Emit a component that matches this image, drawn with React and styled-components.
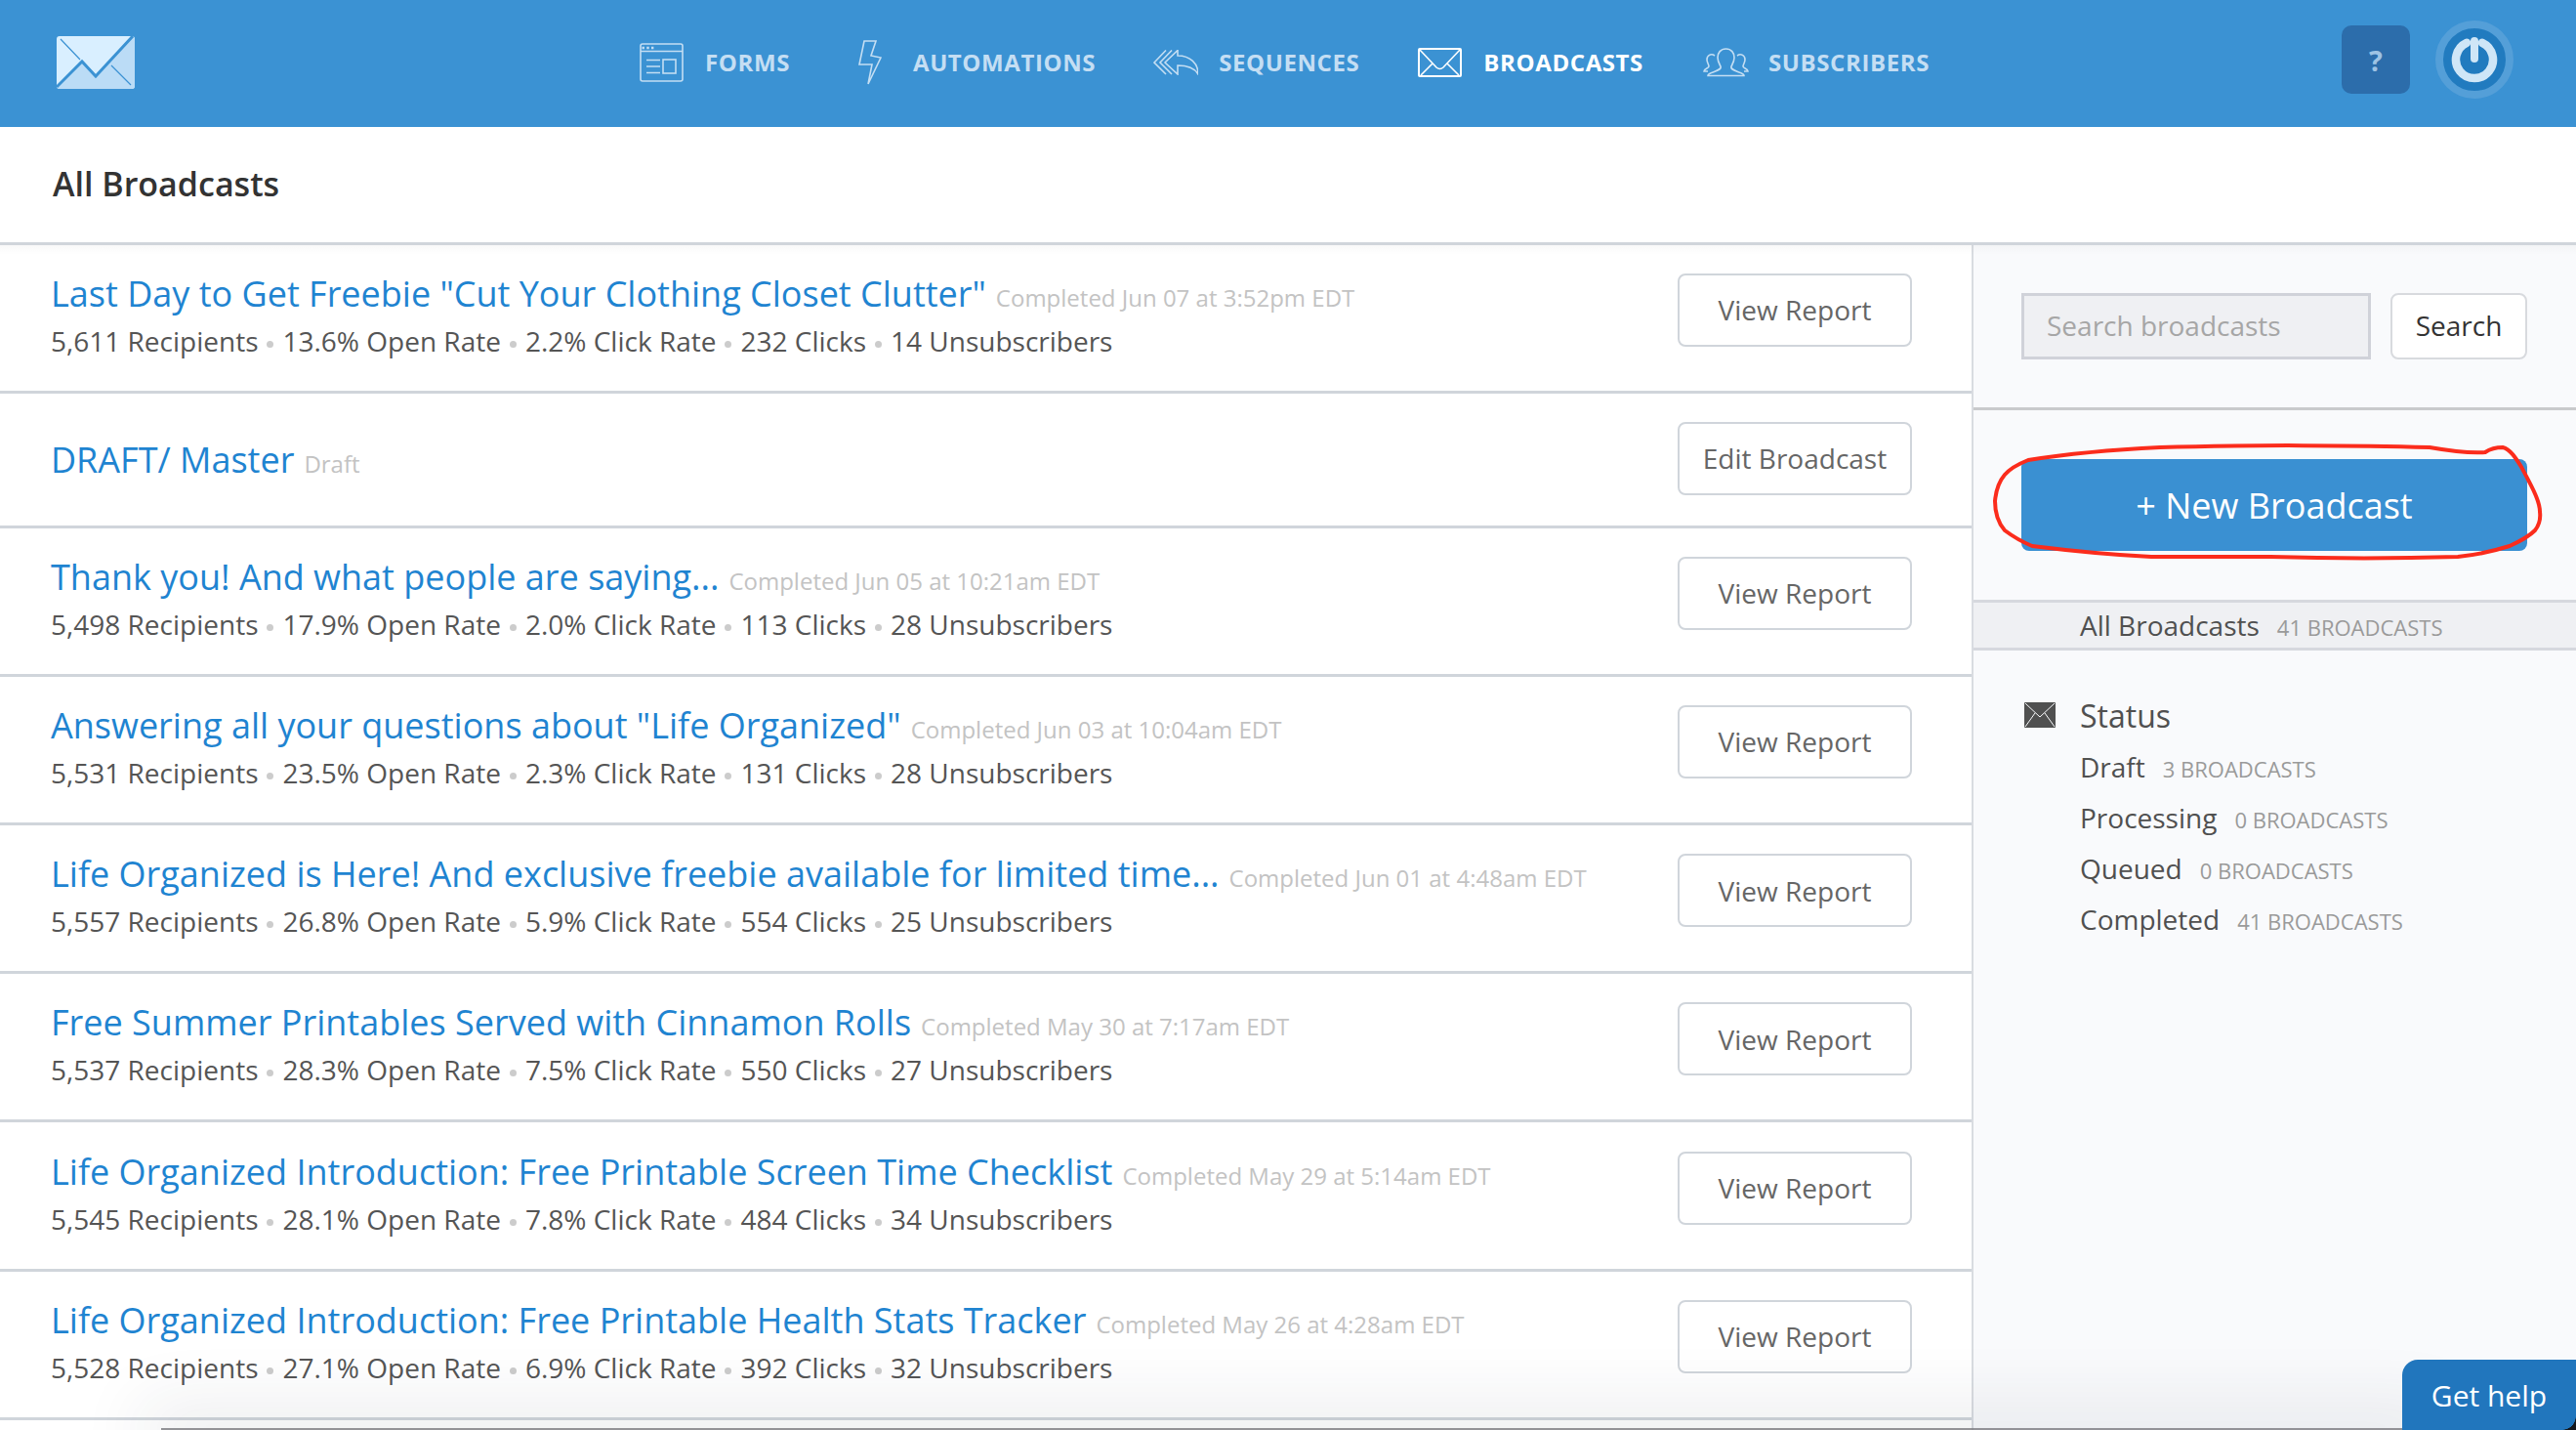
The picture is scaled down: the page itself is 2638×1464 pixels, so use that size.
import React from "react";
import styled, { createGlobalStyle } from "styled-components";

const Global = createGlobalStyle`
  html, body { margin: 0; padding: 0; height: 1464px; overflow: hidden; background: #fff; }
  body { font-family: "Open Sans", "Noto Sans", sans-serif; color: #4d4d4d; }
  * { box-sizing: border-box; }
`;

const Page = styled.div`
  position: relative;
  width: 2638px;
  height: 1464px;
  overflow: hidden;
  display: flex;
  flex-direction: column;
`;
const Header = styled.header`
  flex: none;
  height: 130px;
  background: #3b92d3;
  display: flex;
  align-items: center;
  padding: 0 64px 8px 58px;
`;
const Logo = styled.svg`
  width: 80px;
  height: 54px;
  flex: none;
  margin-top: 6px;
`;
const Nav = styled.nav`
  display: flex;
  align-items: center;
  margin: 5px 0 0 517px;
`;
const NavItem = styled.a`
  display: flex;
  align-items: center;
  gap: ${p => p.$gap}px;
  margin-right: ${p => p.$mr}px;
  font-size: 24px;
  font-weight: 700;
  letter-spacing: 0.6px;
  line-height: 1;
  color: ${p => (p.$active ? "#fff" : "#c4def3")};
  svg { flex: none; display: block; }
`;
const HeaderRight = styled.div`
  margin-left: auto;
  display: flex;
  align-items: center;
  gap: 26px;
`;
const Help = styled.div`
  width: 70px;
  height: 70px;
  border-radius: 10px;
  background: #2c6dab;
  color: #9ec3e4;
  font-size: 29px;
  font-weight: 700;
  display: flex;
  align-items: center;
  justify-content: center;
`;
const Power = styled.div`
  width: 80px;
  height: 80px;
  border-radius: 50%;
  background: #217bbf;
  border: 8px solid #549fd8;
  display: flex;
  align-items: center;
  justify-content: center;
`;
const TitleBar = styled.div`
  flex: none;
  height: 121px;
  display: flex;
  align-items: center;
  padding: 0 0 3px 54px;
  background: #fff;
  border-bottom: 3px solid #d0d5db;
  font-size: 34px;
  font-weight: 600;
  color: #333;
`;
const Body = styled.div`
  position: relative;
  flex: 1;
  display: flex;
  min-height: 0;
  &::before {
    content: "";
    position: absolute;
    left: 0;
    right: 0;
    top: 0;
    height: 10px;
    background: linear-gradient(rgba(0, 0, 0, 0.025), rgba(0, 0, 0, 0));
    pointer-events: none;
  }
`;
const List = styled.main`
  width: 2019px;
  flex: none;
  margin-top: -0.5px;
`;
const Row = styled.div`
  height: ${p => (p.$draft ? 138 : 152.2)}px;
  border-bottom: 3px solid #d0d5db;
  display: flex;
  align-items: center;
  justify-content: space-between;
  padding: 0 61px 0 52px;
`;
const RowText = styled.div`
  min-width: 0;
  margin-top: ${p => (p.$draft ? 8 : -8)}px;
`;
const TitleLine = styled.div`
  line-height: 48px;
  white-space: nowrap;
`;
const RowTitle = styled.a`
  font-size: 36px;
  color: #1f84d1;
`;
const Meta = styled.span`
  font-size: 24px;
  color: #c3c3c3;
  margin-left: 10px;
`;
const Stats = styled.div`
  font-size: 28px;
  line-height: 34px;
  color: #555;
  white-space: nowrap;
`;
const Dot = styled.span`
  display: inline-block;
  width: 7px;
  height: 7px;
  border-radius: 50%;
  background: #ccc;
  margin: 0 9px;
  vertical-align: 4px;
`;
const RowButton = styled.button`
  flex: none;
  width: 240px;
  height: 75px;
  margin-top: ${p => (p.$draft ? -2 : -16)}px;
  background: #fff;
  border: 2px solid #d0d5db;
  border-radius: 8px;
  font: 400 28px "Open Sans", sans-serif;
  color: #666;
  padding: 0;
`;
const Side = styled.aside`
  flex: 1;
  background: #f9fafc;
  border-left: 2px solid #d9dce1;
`;
const SearchBlock = styled.div`
  height: 169px;
  border-bottom: 3px solid #c9cacc;
  display: flex;
  gap: 20px;
  padding: 49px 50px 0 49px;
`;
const SearchInput = styled.div`
  width: 358px;
  height: 68px;
  background: #eff0f3;
  border: 3px solid #d0d2d9;
  color: #a6a6a6;
  font-size: 28px;
  display: flex;
  align-items: center;
  padding: 0 0 3px 23px;
`;
const SearchButton = styled.button`
  width: 140px;
  height: 68px;
  background: #fff;
  border: 2px solid #d8dade;
  border-radius: 8px;
  font: 400 28px "Open Sans", sans-serif;
  color: #333;
  padding: 0 0 3px;
`;
const CtaBlock = styled.div`
  padding: 50px 50px 50px 49px;
  position: relative;
`;
const Cta = styled.button`
  display: block;
  width: 518px;
  height: 94px;
  background: #3a90d2;
  border: none;
  border-radius: 8px;
  color: #fff;
  font: 400 36px "Open Sans", sans-serif;
  padding: 0;
`;
const Scribble = styled.svg`
  position: absolute;
  left: 0;
  top: 0;
  width: 617px;
  height: 194px;
  pointer-events: none;
`;
const AllRow = styled.div`
  height: 52px;
  background: #eff0f3;
  border-top: 3px solid #d6d8de;
  border-bottom: 3px solid #d6d8de;
  display: flex;
  align-items: center;
  padding: 0 0 1px 109px;
`;
const FilterLabel = styled.span`
  font-size: 28px;
  color: #505050;
`;
const Count = styled.span`
  font-size: 22px;
  color: #9a9a9a;
  margin-left: 18px;
  position: relative;
  top: 2px;
`;
const StatusBlock = styled.div`
  padding: 41px 0 0 52px;
`;
const StatusHead = styled.div`
  display: flex;
  align-items: center;
  height: 52px;
  padding-bottom: 2px;
  font-size: 32px;
  color: #505050;
  svg { flex: none; margin-right: 25px; }
`;
const Filter = styled.div`
  height: 52px;
  display: flex;
  align-items: center;
  padding-left: 57px;
`;
const GetHelp = styled.div`
  position: absolute;
  right: 0;
  bottom: 0;
  width: 178px;
  height: 72px;
  background: #2176bd;
  border-radius: 16px 0 0 0;
  color: #fff;
  font-size: 30px;
  display: flex;
  align-items: center;
  justify-content: center;
  z-index: 3;
  &::after {
    content: "";
    position: absolute;
    right: 0;
    bottom: 0;
    width: 14px;
    height: 14px;
    background: radial-gradient(circle at 0 0, transparent 13.5px, #15181d 14px);
  }
`;
const BottomShade = styled.div`
  position: absolute;
  left: 165px;
  right: 150px;
  bottom: -2px;
  height: 4px;
  background: rgba(120,120,125,.8);
  box-shadow: 0 0 70px 20px rgba(40,45,60,.11);
  z-index: 2;
  pointer-events: none;
`;

const rows = [
  ["Last Day to Get Freebie \"Cut Your Clothing Closet Clutter\"", "Completed Jun 07 at 3:52pm EDT", "5,611", "13.6%", "2.2%", "232", "14"],
  ["DRAFT/ Master", "Draft"],
  ["Thank you! And what people are saying...", "Completed Jun 05 at 10:21am EDT", "5,498", "17.9%", "2.0%", "113", "28"],
  ["Answering all your questions about \"Life Organized\"", "Completed Jun 03 at 10:04am EDT", "5,531", "23.5%", "2.3%", "131", "28"],
  ["Life Organized is Here! And exclusive freebie available for limited time...", "Completed Jun 01 at 4:48am EDT", "5,557", "26.8%", "5.9%", "554", "25"],
  ["Free Summer Printables Served with Cinnamon Rolls", "Completed May 30 at 7:17am EDT", "5,537", "28.3%", "7.5%", "550", "27"],
  ["Life Organized Introduction: Free Printable Screen Time Checklist", "Completed May 29 at 5:14am EDT", "5,545", "28.1%", "7.8%", "484", "34"],
  ["Life Organized Introduction: Free Printable Health Stats Tracker", "Completed May 26 at 4:28am EDT", "5,528", "27.1%", "6.9%", "392", "32"],
];

const filters = [["Draft", "3 BROADCASTS"], ["Processing", "0 BROADCASTS"], ["Queued", "0 BROADCASTS"], ["Completed", "41 BROADCASTS"]];

const stroke = { fill: "none", stroke: "#c4def3", strokeWidth: 1.6 };

const FormsIcon = () => (
  <svg width="45" height="40" viewBox="0 0 45 40">
    <rect x="1" y="1" width="43" height="38" rx="2" {...stroke} />
    <path d="M1 8.5h43M7 17.5h14M7 24h14M7 30.5h14" {...stroke} />
    <rect x="24" y="17" width="13" height="14" {...stroke} />
    <path d="M2.5 5h2.4M7.3 5h2.4M12 5h2.4" stroke="#c4def3" strokeWidth="2.4" />
  </svg>
);
const BoltIcon = () => (
  <svg width="24" height="46" viewBox="0 0 24 46">
    <path d="M6 1h12l-5 15 10 2-13 27 4-20H1z" {...stroke} />
  </svg>
);
const ReplyIcon = () => (
  <svg width="46" height="26" viewBox="0 0 46 26">
    <path d="M13 .5 1 13l12 12M19 .5 7 13l12 12" {...stroke} />
    <path d="M12 13 25 .5V6c13 0 21 8 21 19-4-7-11-9-21-9v9z" {...stroke} />
  </svg>
);
const MailIcon = () => (
  <svg width="45" height="30" viewBox="0 0 45 30">
    <rect x="1" y="1" width="43" height="28" rx="1" fill="none" stroke="#fff" strokeWidth="2" />
    <path d="M2 2 19 20q3.500 3 7 0L43 2M3 28 15 16M42 28 30 16" fill="none" stroke="#fff" strokeWidth="1.6" />
  </svg>
);
const PeopleIcon = () => (
  <svg width="47" height="30" viewBox="0 0 47 30">
    <path d="M23.500 1C18 1 15 5 15 10c0 4 2 7 3 9 1 3-3 4-8 6-3 1-5 2-5 3.500h37c0-1.500-2-2.500-5-3.500-5-2-9-3-8-6 1-2 3-5 3-9 0-5-3-9-8.500-9z" {...stroke} />
    <path d="M12 8c-4-3-8 0-8 4 0 3 2 5 2 7 0 2-5 2-5 5h4M35 8c4-3 8 0 8 4 0 3-2 5-2 7 0 2 5 2 5 5h-4" {...stroke} />
  </svg>
);

export default function App() {
  return (
    <Page>
      <Global />
      <Header>
        <Logo viewBox="0 0 80 54">
          <rect x="0" y="0" width="80" height="54" rx="3" fill="#d9efff" />
          <path d="M0 51 26 26 40 41 77 1h1a2 2 0 0 1 2 2v48a3 3 0 0 1-3 3H3a3 3 0 0 1-3-3z" fill="#bbdcf6" />
          <path d="M78 0 40 41 26 26 0 52" fill="none" stroke="#3b92d3" strokeWidth="3" />
          <path d="M4 3 24 24M56 30 76 50" fill="none" stroke="#3b92d3" strokeWidth="1.200" />
        </Logo>
        <Nav>
          <NavItem $gap={22} $mr={70}><FormsIcon />FORMS</NavItem>
          <NavItem $gap={32} $mr={59}><BoltIcon />AUTOMATIONS</NavItem>
          <NavItem $gap={21} $mr={60}><ReplyIcon />SEQUENCES</NavItem>
          <NavItem $active $gap={22} $mr={61}><MailIcon />BROADCASTS</NavItem>
          <NavItem $gap={20} $mr={0}><PeopleIcon />SUBSCRIBERS</NavItem>
        </Nav>
        <HeaderRight>
          <Help>?</Help>
          <Power>
            <svg width="56" height="56" viewBox="0 0 56 56">
              <path d="M20 10.800a19 19 0 1 0 16 0" fill="none" stroke="#cfe6f7" strokeWidth="8.500" strokeLinecap="round" />
              <path d="M28 9v18" fill="none" stroke="#cfe6f7" strokeWidth="8" strokeLinecap="round" />
            </svg>
          </Power>
        </HeaderRight>
      </Header>
      <TitleBar>All Broadcasts</TitleBar>
      <Body>
        <List>
          {rows.map((r, i) => {
            const draft = r.length === 2;
            return (
              <Row key={i} $draft={draft}>
                <RowText $draft={draft}>
                  <TitleLine>
                    <RowTitle>{r[0]}</RowTitle>
                    <Meta>{r[1]}</Meta>
                  </TitleLine>
                  {!draft && (
                    <Stats>
                      {r[2]} Recipients<Dot />{r[3]} Open Rate<Dot />{r[4]} Click Rate<Dot />{r[5]} Clicks<Dot />{r[6]} Unsubscribers
                    </Stats>
                  )}
                </RowText>
                <RowButton $draft={draft}>{draft ? "Edit Broadcast" : "View Report"}</RowButton>
              </Row>
            );
          })}
        </List>
        <Side>
          <SearchBlock>
            <SearchInput>Search broadcasts</SearchInput>
            <SearchButton>Search</SearchButton>
          </SearchBlock>
          <CtaBlock>
            <Cta>+ New Broadcast</Cta>
            <Scribble viewBox="0 0 617 194">
              <path d="M56 51C100 44 150 40 191 38C280 35 400 36 467 38C490 42 510 44 524 43C530 39 537 38 542 38C550 40 556 50 561 58C570 75 580 92 580 104C581 112 579 118 575 123C568 130 560 134 549 139C530 145 515 148 496 150C430 152 370 152 304 150C260 150 220 150 182 150C140 148 100 144 60 139C48 134 40 129 32 123C25 115 22 103 22 93C23 82 26 73 32 66C38 59 46 55 56 51Z" fill="none" stroke="#fb2c1c" strokeWidth="4" strokeLinejoin="round" />
            </Scribble>
          </CtaBlock>
          <AllRow>
            <FilterLabel>All Broadcasts</FilterLabel>
            <Count>41 BROADCASTS</Count>
          </AllRow>
          <StatusBlock>
            <StatusHead>
              <svg width="32" height="26" viewBox="0 0 32 26">
                <rect x="0" y="0" width="32" height="26" rx="1" fill="#505050" />
                <path d="M1 1 16 15 31 1M1 25 11 11M31 25 21 11" fill="none" stroke="#f9fafc" strokeWidth="1" />
              </svg>
              Status
            </StatusHead>
            {filters.map(f => (
              <Filter key={f[0]}>
                <FilterLabel>{f[0]}</FilterLabel>
                <Count>{f[1]}</Count>
              </Filter>
            ))}
          </StatusBlock>
        </Side>
      </Body>
      <BottomShade />
      <GetHelp>Get help</GetHelp>
    </Page>
  );
}
